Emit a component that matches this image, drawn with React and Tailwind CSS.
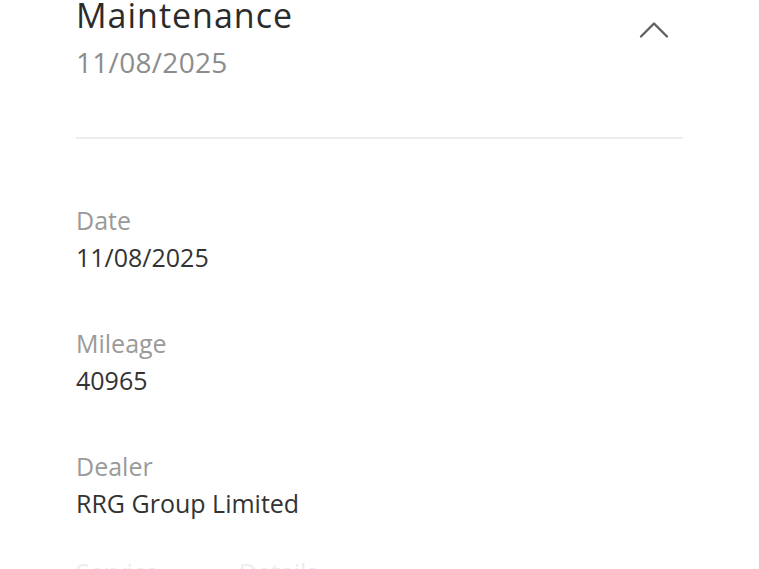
import { ChevronUp } from "lucide-react";

const rows = [
  { label: "Date", value: "11/08/2025" },
  { label: "Mileage", value: "40965" },
  { label: "Dealer", value: "RRG Group Limited" },
];

export default function App() {
  return (
    <div
      className="h-[569px] overflow-hidden bg-white"
      style={{ fontFamily: '"Open Sans", "Noto Sans", sans-serif' }}
    >
      <div className="ml-[76px] mr-[76px] -mt-[7px]">
        {/* header */}
        <div className="flex items-start justify-between">
          <div>
            <h2 className="text-[34px] leading-[44px] tracking-[1px] text-[#2b2b2b]">Maintenance</h2>
            <p className="mt-[5px] text-[28px] leading-[40px] tracking-[0.3px] text-[#8c8c8c]">11/08/2025</p>
          </div>
          <ChevronUp className="mt-[11px] mr-[3px] text-[#606060]" size={52} strokeWidth={1.1} />
        </div>

        <div className="mt-[55px] h-[2px] bg-[#ececec]" />

        {/* details */}
        <div className="pt-[63px] flex flex-col gap-[49px]">
          {rows.map((r) => (
            <div key={r.label}>
              <div className="text-[25px] leading-[37px] text-[#9a9a9a]">{r.label}</div>
              <div className="text-[25px] leading-[37px] text-[#333]">{r.value}</div>
            </div>
          ))}
        </div>

        <div className="mt-[32px] flex gap-[80px] text-[25px] leading-[37px] text-[#ededed]">
          <span>Service</span>
          <span>Details</span>
        </div>
      </div>
    </div>
  );
}
